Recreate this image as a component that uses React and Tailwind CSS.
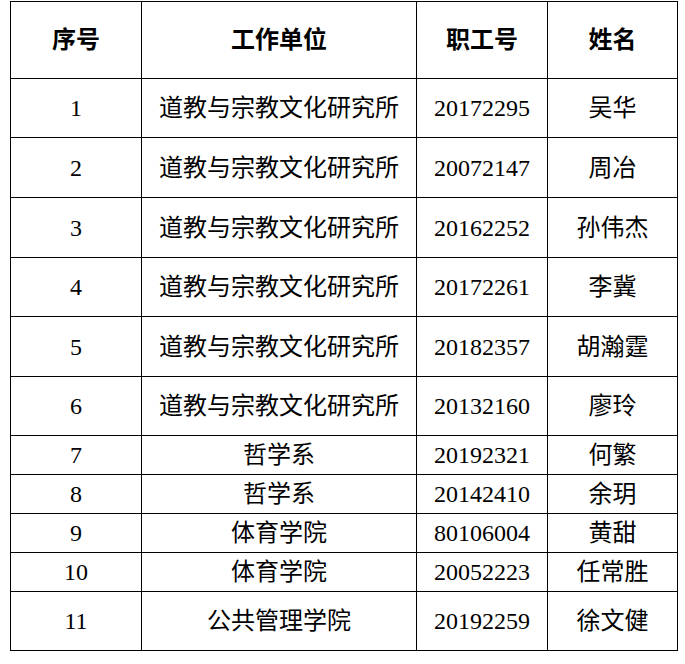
import React from "react";

const rows = [
  ["1", "道教与宗教文化研究所", "20172295", "吴华", 59],
  ["2", "道教与宗教文化研究所", "20072147", "周冶", 60],
  ["3", "道教与宗教文化研究所", "20162252", "孙伟杰", 60],
  ["4", "道教与宗教文化研究所", "20172261", "李冀", 59],
  ["5", "道教与宗教文化研究所", "20182357", "胡瀚霆", 60],
  ["6", "道教与宗教文化研究所", "20132160", "廖玲", 59],
  ["7", "哲学系", "20192321", "何繁", 39],
  ["8", "哲学系", "20142410", "余玥", 39],
  ["9", "体育学院", "80106004", "黄甜", 39],
  ["10", "体育学院", "20052223", "任常胜", 39],
  ["11", "公共管理学院", "20192259", "徐文健", 59],
];

const rowH = {
  59: "h-[59px]",
  60: "h-[60px]",
  39: "h-[39px]",
};

function Cell({ children, bold }) {
  return (
    <div
      className={
        "flex items-center justify-center border-r border-b border-black text-[24px] leading-none text-black " +
        (bold ? "font-bold" : "font-normal")
      }
    >
      {children}
    </div>
  );
}

export default function App() {
  return (
    <div
      className="w-[685px] h-[664px] bg-white pt-[1px] pl-[10px]"
      style={{ fontFamily: '"Liberation Serif", "Noto Sans CJK SC", serif' }}
    >
      <div className="w-[668px] border-l border-t border-black">
        <div className="grid grid-cols-[131px_275px_131px_130px] h-[77px]">
          <Cell bold>序号</Cell>
          <Cell bold>工作单位</Cell>
          <Cell bold>职工号</Cell>
          <Cell bold>姓名</Cell>
        </div>
        {rows.map(([n, unit, id, name, h]) => (
          <div
            key={n}
            className={"grid grid-cols-[131px_275px_131px_130px] " + rowH[h]}
          >
            <Cell>{n}</Cell>
            <Cell>{unit}</Cell>
            <Cell>{id}</Cell>
            <Cell>{name}</Cell>
          </div>
        ))}
      </div>
    </div>
  );
}
